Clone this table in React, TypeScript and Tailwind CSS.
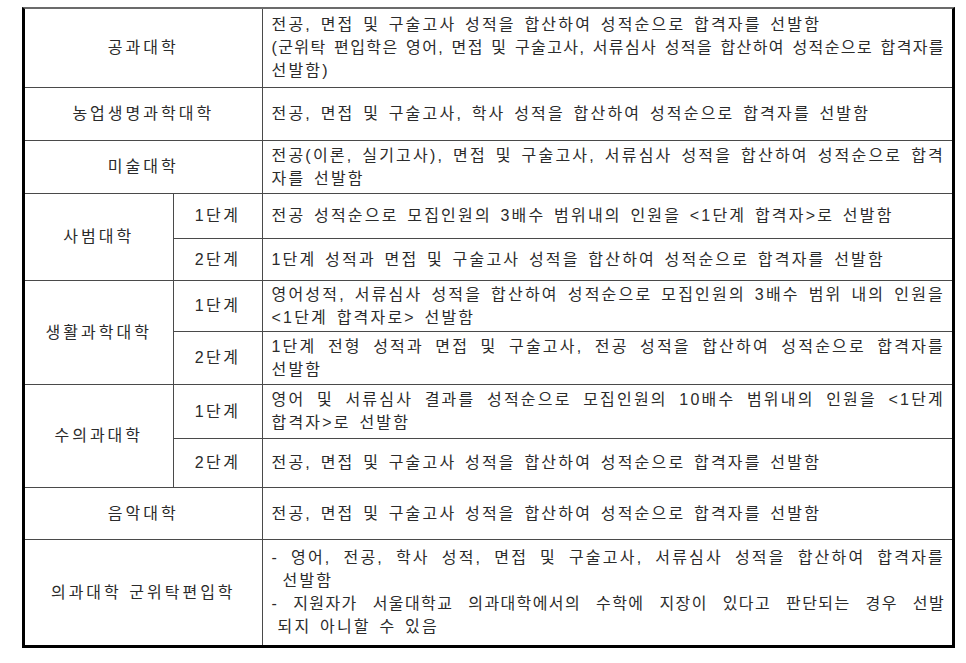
import React from 'react'

type Line = { text: string; full?: boolean; tight?: boolean; indent?: string }

interface Row {
  college?: string
  span?: number
  stage?: string
  h: string
  lines: Line[]
}

const rows: Row[] = [
  {
    college: '공과대학',
    h: 'h-[78px]',
    lines: [
      { text: '전공, 면접 및 구술고사 성적을 합산하여 성적순으로 합격자를 선발함' },
      { text: '(군위탁 편입학은 영어, 면접 및 구술고사, 서류심사 성적을 합산하여 성적순으로 합격자를', full: true, tight: true },
      { text: '선발함)' },
    ],
  },
  {
    college: '농업생명과학대학',
    h: 'h-[53px]',
    lines: [{ text: '전공, 면접 및 구술고사, 학사 성적을 합산하여 성적순으로 합격자를 선발함' }],
  },
  {
    college: '미술대학',
    h: 'h-[53px]',
    lines: [
      { text: '전공(이론, 실기고사), 면접 및 구술고사, 서류심사 성적을 합산하여 성적순으로 합격', full: true },
      { text: '자를 선발함' },
    ],
  },
  {
    college: '사범대학',
    span: 2,
    stage: '1단계',
    h: 'h-[45px]',
    lines: [{ text: '전공 성적순으로 모집인원의 3배수 범위내의 인원을 <1단계 합격자>로 선발함' }],
  },
  {
    stage: '2단계',
    h: 'h-[42px]',
    lines: [{ text: '1단계 성적과 면접 및 구술고사 성적을 합산하여 성적순으로 합격자를 선발함' }],
  },
  {
    college: '생활과학대학',
    span: 2,
    stage: '1단계',
    h: 'h-[51px]',
    lines: [
      { text: '영어성적, 서류심사 성적을 합산하여 성적순으로 모집인원의 3배수 범위 내의 인원을', full: true },
      { text: '<1단계 합격자로> 선발함' },
    ],
  },
  {
    stage: '2단계',
    h: 'h-[53px]',
    lines: [
      { text: '1단계 전형 성적과 면접 및 구술고사, 전공 성적을 합산하여 성적순으로 합격자를', full: true },
      { text: '선발함' },
    ],
  },
  {
    college: '수의과대학',
    span: 2,
    stage: '1단계',
    h: 'h-[54px]',
    lines: [
      { text: '영어 및 서류심사 결과를 성적순으로 모집인원의 10배수 범위내의 인원을 <1단계', full: true },
      { text: '합격자>로 선발함' },
    ],
  },
  {
    stage: '2단계',
    h: 'h-[49px]',
    lines: [{ text: '전공, 면접 및 구술고사 성적을 합산하여 성적순으로 합격자를 선발함' }],
  },
  {
    college: '음악대학',
    h: 'h-[52px]',
    lines: [{ text: '전공, 면접 및 구술고사 성적을 합산하여 성적순으로 합격자를 선발함' }],
  },
  {
    college: '의과대학 군위탁편입학',
    h: 'h-[106px]',
    lines: [
      { text: '- 영어, 전공, 학사 성적, 면접 및 구술고사, 서류심사 성적을 합산하여 합격자를', full: true },
      { text: '선발함', indent: 'pl-[11px]' },
      { text: '- 지원자가 서울대학교 의과대학에서의 수학에 지장이 있다고 판단되는 경우 선발', full: true, tight: true },
      { text: '되지 아니할 수 있음', indent: 'pl-[6px]' },
    ],
  },
]

const cell = 'border border-[#4a4a4a] align-middle'
const college = `${cell} text-center tracking-[3px] [word-spacing:0px]`
const stage = `${cell} text-center tracking-[2.4px]`

export default function App() {
  return (
    <div className="min-h-screen bg-white pt-[7px] pl-[22px] font-['Liberation_Sans','Noto_Sans_CJK_KR',sans-serif] text-[16px] leading-[23px] tracking-[2.2px] [word-spacing:2px] text-[#2b2b2b]">
      <div className="w-[933px] border-t-2 border-t-[#6b6b6b] border-x-[3px] border-x-black border-b-[3px] border-b-black">
        <table className="w-full table-fixed border-collapse border-hidden">
          <colgroup>
            <col className="w-[148px]" />
            <col className="w-[89px]" />
            <col />
          </colgroup>
          <tbody>
            {rows.map((r, i) => (
              <tr key={i} className={r.h}>
                {r.college && (
                  <td className={college} colSpan={r.stage ? 1 : 2} rowSpan={r.span ?? 1}>
                    {r.college}
                  </td>
                )}
                {r.stage && <td className={stage}>{r.stage}</td>}
                <td className={`${cell} pl-[9px] pr-[7px]`}>
                  {r.lines.map((l, j) => (
                    <div
                      key={j}
                      className={`whitespace-pre ${l.full ? 'text-justify [text-align-last:justify]' : 'text-left'} ${l.tight ? 'tracking-[1.4px] [word-spacing:0px]' : ''} ${l.indent ?? ''}`}
                    >
                      {l.text}
                    </div>
                  ))}
                </td>
              </tr>
            ))}
          </tbody>
        </table>
      </div>
    </div>
  )
}
